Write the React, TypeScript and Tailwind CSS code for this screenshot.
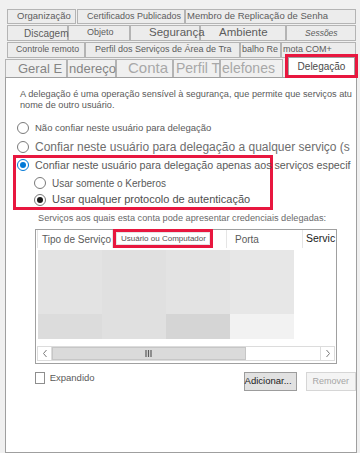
import React from 'react';

const Tab: React.FC<{ w: number; className?: string; children?: React.ReactNode }> = ({ w, className, children }) => (
  <div
    className={`h-full shrink-0 border border-[#b4b4b4] bg-[#ececec] text-[#5c5c5c] whitespace-nowrap flex items-center ${className ?? ''}`}
    style={{ width: w }}
  >
    <span className="relative z-10">{children}</span>
  </div>
);

const Radio: React.FC<{ checked?: boolean; blue?: boolean }> = ({ checked, blue }) => (
  <span
    className={`w-[12px] h-[12px] rounded-full border bg-white shrink-0 flex items-center justify-center ${
      blue ? 'border-[#0078d7]' : 'border-[#7a7a7a]'
    }`}
  >
    {checked && <span className={`w-[6px] h-[6px] rounded-full ${blue ? 'bg-[#0078d7]' : 'bg-[#1a1a1a]'}`} />}
  </span>
);

const blocks = [
  ['#e3e3e3', '#e0e0e0', '#e3e3e3', '#e7e7e7'],
  ['#dcdcdc', '#e0e0e0', '#d5d5d5', '#f2f2f2'],
];

export default function App() {
  return (
    <div className="w-[360px] h-[453px] bg-[#f0f0f0] overflow-hidden font-['Liberation_Sans',Arial,sans-serif] pt-[9px]">
      {/* tab row 1 */}
      <div className="flex h-[15px] pl-[7px]">
        <Tab w={69} className="text-[9.5px] pl-[9px]">Organização</Tab>
        <Tab w={108} className="text-[9px] pl-[9px] ml-[1px]">Certificados Publicados</Tab>
        <Tab w={171} className="text-[9.5px] pl-[1px]">Membro de Replicação de Senha</Tab>
      </div>
      {/* tab row 2 */}
      <div className="flex h-[16px] pl-[7px] mt-[1px]">
        <Tab w={61} className="text-[10px] pl-[16px]">Discagem</Tab>
        <Tab w={62} className="text-[9px] pl-[18px]">Objeto</Tab>
        <Tab w={70} className="text-[11.5px] pl-[18px]">Segurança</Tab>
        <Tab w={86} className="text-[11.5px] pl-[18px]">Ambiente</Tab>
        <Tab w={70} className="text-[8.5px] italic pl-[18px]">Sessões</Tab>
      </div>
      {/* tab row 3 */}
      <div className="flex h-[16px] pl-[7px] mt-[1px]">
        <Tab w={78} className="text-[8.8px] pl-[8px]">Controle remoto</Tab>
        <Tab w={155} className="text-[9px] pl-[9px]">Perfil dos Serviços de Área de Tra</Tab>
        <Tab w={41} className="text-[9px] pl-[1px]">balho Re</Tab>
        <Tab w={75} className="text-[9px] pl-[1px]">mota COM+</Tab>
      </div>
      {/* tab row 4 */}
      <div className="flex h-[18px] pl-[5px] mt-[1px] items-end">
        <div className="flex h-[18px]">
          <Tab w={62} className="text-[13px] pl-[12px] text-[#858585] bg-[#f0f0f0] border-b-0">Geral E</Tab>
          <Tab w={49} className="text-[13px] pl-[1px] text-[#858585] bg-[#f0f0f0] border-b-0">ndereço</Tab>
          <Tab w={57} className="text-[15px] pl-[11px] text-[#a8a8a8] bg-[#f0f0f0] border-b-0">Conta</Tab>
          <Tab w={47} className="text-[14px] pl-[2px] text-[#a8a8a8] bg-[#f0f0f0] border-b-0">Perfil T</Tab>
          <Tab w={63} className="text-[14px] pl-[1px] text-[#a8a8a8] bg-[#f0f0f0] border-b-0">elefones</Tab>
        </div>
        <div className="ml-[2px] -mb-[1px] relative z-10 border-[3px] border-[#e8173f] p-0 h-[24px] w-[73px]">
          <div className="h-full bg-white border border-b-0 border-[#a0a0a0] flex items-center justify-center text-[10px] text-[#4a4a4a]">
            Delegação
          </div>
        </div>
      </div>
      {/* panel */}
      <div className="ml-[5px] w-[352px] h-[376px] bg-white border border-[#9f9f9f] overflow-hidden">
        <div className="pl-[14px] mt-[11px] text-[9.2px] leading-[11px] text-[#5a5a5a] whitespace-nowrap">
          <div>A delegação é uma operação sensível à segurança, que permite que serviços atu</div>
          <div>nome de outro usuário.</div>
        </div>
        <div className="flex items-center h-[16px] mt-[9px] pl-[11px] gap-[6px] whitespace-nowrap">
          <Radio />
          <span className="text-[9.5px] text-[#5a5a5a]">Não confiar neste usuário para delegação</span>
        </div>
        <div className="flex items-center h-[16px] mt-[3px] pl-[11px] gap-[6px] whitespace-nowrap">
          <Radio />
          <span className="text-[12px] text-[#6e6e6e]">Confiar neste usuário para delegação a qualquer serviço (s</span>
        </div>
        <div className="ml-[7px] w-[260px] h-[55px] border-[3px] border-[#e8173f]">
          <div className="flex items-center h-[14px] pl-[1px] gap-[6px] whitespace-nowrap">
            <Radio checked blue />
            <span className="text-[10.7px] text-[#5a5a5a]">Confiar neste usuário para delegação apenas aos serviços especif</span>
          </div>
          <div className="flex items-center h-[18px] mt-[2px] pl-[18px] gap-[6px] whitespace-nowrap">
            <Radio />
            <span className="text-[10px] text-[#5a5a5a]">Usar somente o Kerberos</span>
          </div>
          <div className="flex items-center h-[15px] pl-[18px] gap-[6px] whitespace-nowrap">
            <Radio checked />
            <span className="text-[11px] text-[#4f4f4f]">Usar qualquer protocolo de autenticação</span>
          </div>
        </div>
        <div className="flex items-center h-[14px] mt-[2px] pl-[32px] text-[9.2px] text-[#6a6a6a] whitespace-nowrap">
          Serviços aos quais esta conta pode apresentar credenciais delegadas:
        </div>
        {/* list */}
        <div className="ml-[29px] mt-[3px] w-[302px] h-[135px] border border-[#a0a0a0] flex flex-col">
          <div className="flex h-[18px] text-[#5a5a5a] whitespace-nowrap">
            <div className="w-[77px] pl-[1px]">
              <div className="h-full border-x border-[#e5e5e5] text-[10px] flex items-center pl-[4px]">Tipo de Serviço</div>
            </div>
            <div className="w-[100px] h-[19px] border-[3px] border-[#e8173f] -mt-[1px]">
              <div className="h-full border border-[#e5e5e5] text-[8px] text-[#505050] flex items-center pl-[4px]">Usuário ou Computador</div>
            </div>
            <div className="w-[14px] border-r border-[#e5e5e5]" />
            <div className="w-[76px] border-r border-[#e5e5e5] text-[10px] flex items-center pl-[8px]">Porta</div>
            <div className="flex-1 text-[10.5px] text-[#1a1a1a] flex items-center pl-[3px]">Servic</div>
          </div>
          <div className="flex-1 pt-[2px] pl-[2px]">
            {blocks.map((row, ri) => (
              <div key={ri} className={`flex ${ri === 0 ? 'h-[64px]' : 'h-[25px]'}`}>
                {row.map((c, ci) => (
                  <div key={ci} className="w-[64px] h-full" style={{ backgroundColor: c }} />
                ))}
              </div>
            ))}
          </div>
          {/* scrollbar */}
          <div className="flex h-[15px] mx-[1px] mb-[2px] border border-[#dcdcdc] bg-white">
            <div className="w-[14px] border-r border-[#dcdcdc] flex items-center justify-center">
              <svg width="6" height="9" viewBox="0 0 6 9"><path d="M4.5 1 L1.5 4.5 L4.5 8" fill="none" stroke="#7a7a7a" strokeWidth="1" /></svg>
            </div>
            <div className="w-[194px] bg-[#dadada] border border-[#c6c6c6] flex items-center justify-center">
              <svg width="8" height="7" viewBox="0 0 8 7"><path d="M1 0 V7 M3.5 0 V7 M6 0 V7" stroke="#5a5a5a" strokeWidth="1.2" /></svg>
            </div>
            <div className="flex-1" />
            <div className="w-[14px] border-l border-[#dcdcdc] flex items-center justify-center">
              <svg width="6" height="9" viewBox="0 0 6 9"><path d="M1.5 1 L4.5 4.5 L1.5 8" fill="none" stroke="#7a7a7a" strokeWidth="1" /></svg>
            </div>
          </div>
        </div>
        {/* bottom row */}
        <div className="flex items-center mt-[8px] pl-[29px] h-[19px]">
          <span className="w-[12px] h-[12px] border border-[#8e8e8e] bg-white -mt-[7px]" />
          <span className="ml-[5px] text-[9.5px] text-[#5a5a5a] -mt-[7px]">Expandido</span>
          <div className="ml-[149px] w-[65px] h-[19px] bg-[#e1e1e1] border border-[#9c9c9c] text-[9.5px] text-[#1a1a1a] flex items-center justify-end pr-[4px]">
            Adicionar...
          </div>
          <div className="ml-[9px] w-[65px] h-[19px] bg-[#f4f4f4] border border-[#d6d6d6] text-[9px] text-[#a5a5a5] flex items-center justify-center">
            Remover
          </div>
        </div>
      </div>
    </div>
  );
}
